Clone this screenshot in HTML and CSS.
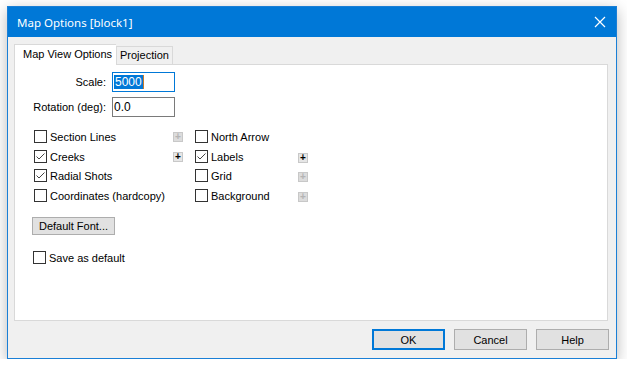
FILE: index.html
```html
<!DOCTYPE html>
<html lang="en">
<head>
    <meta charset="UTF-8">
    <title>Map Options [block1]</title>
    <link rel="stylesheet" href="styles.css">
</head>
<body>
    <div class="window">
        <div class="titlebar">
            <span class="title">Map Options [block1]</span>
            <svg class="close" width="12" height="12" viewBox="0 0 12 12">
                <path d="M1 1 L11 11 M11 1 L1 11" stroke="#fff" stroke-width="1.2" fill="none"/>
            </svg>
        </div>

        <div class="client">
            <div class="tabs">
                <div class="tab active">Map View Options</div>
                <div class="tab">Projection</div>
            </div>

            <div class="panel">
                <div class="fields">
                    <label class="field-label">Scale:</label>
                    <div class="textbox focused"><span class="selected">5000</span><span class="caret"></span></div>
                    <label class="field-label">Rotation (deg):</label>
                    <div class="textbox">0.0</div>
                </div>

                <div class="options">
                    <div class="check"><span class="box"></span>Section Lines</div>
                    <div class="plus disabled">+</div>
                    <div class="check"><span class="box"></span>North Arrow</div>
                    <div></div>

                    <div class="check"><span class="box checked"><svg width="11" height="11" viewBox="0 0 11 11"><path d="M1.5 5.5 L4 8 L9.5 2.5" stroke="#444" stroke-width="1" fill="none"/></svg></span>Creeks</div>
                    <div class="plus">+</div>
                    <div class="check"><span class="box checked"><svg width="11" height="11" viewBox="0 0 11 11"><path d="M1.5 5.5 L4 8 L9.5 2.5" stroke="#444" stroke-width="1" fill="none"/></svg></span>Labels</div>
                    <div class="plus low">+</div>

                    <div class="check"><span class="box checked"><svg width="11" height="11" viewBox="0 0 11 11"><path d="M1.5 5.5 L4 8 L9.5 2.5" stroke="#444" stroke-width="1" fill="none"/></svg></span>Radial Shots</div>
                    <div></div>
                    <div class="check"><span class="box"></span>Grid</div>
                    <div class="plus disabled low">+</div>

                    <div class="check"><span class="box"></span>Coordinates (hardcopy)</div>
                    <div></div>
                    <div class="check"><span class="box"></span>Background</div>
                    <div class="plus disabled low">+</div>
                </div>

                <button class="btn font-btn">Default Font...</button>

                <div class="check save"><span class="box"></span>Save as default</div>
            </div>

            <div class="footer">
                <button class="btn dlg default">OK</button>
                <button class="btn dlg">Cancel</button>
                <button class="btn dlg">Help</button>
            </div>
        </div>
    </div>
</body>
</html>
```

FILE: styles.css
```css
* {
    box-sizing: border-box;
    margin: 0;
    padding: 0;
}

body {
    background: #ffffff;
    font-family: 'Liberation Sans', Arial, sans-serif;
    font-size: 11px;
    color: #000;
}

.window {
    margin: 6px 0 0 7px;
    width: 610px;
    height: 353px;
    border: 1px solid #1a7fd6;
    background: #f0f0f0;
    box-shadow: 0 4px 14px rgba(0, 0, 0, 0.28);
    display: flex;
    flex-direction: column;
}

.titlebar {
    height: 30px;
    background: #0078d7;
    color: #fff;
    display: flex;
    align-items: center;
    justify-content: space-between;
    padding: 0 10px 0 9px;
}

.title {
    font-family: 'Noto Sans', sans-serif;
    font-size: 11.5px;
}

.client {
    flex: 1;
    padding: 7px 7px 0 6px;
}

/* tab strip */
.tabs {
    display: flex;
    align-items: flex-end;
    height: 20px;
}

.tab {
    height: 18px;
    padding: 0 3px;
    border: 1px solid #d9d9d9;
    border-bottom: none;
    background: #f0f0f0;
    line-height: 17px;
    white-space: nowrap;
}

.tab.active {
    height: 21px;
    width: 102px;
    padding-left: 8px;
    background: #fff;
    line-height: 19px;
    position: relative;
    top: 1px;
    border-right: none;
}

.panel {
    width: 594px;
    height: 257px;
    border: 1px solid #d9d9d9;
    background: #fff;
    padding: 7px 0 0 18px;
}

/* scale / rotation */
.fields {
    display: grid;
    grid-template-columns: 73px 63px;
    grid-auto-rows: 20px;
    column-gap: 6px;
    row-gap: 5px;
}

.field-label {
    text-align: right;
    align-self: center;
}

.textbox {
    border: 1px solid #7a7a7a;
    padding: 2px 1px;
    font-size: 12px;
    line-height: 14px;
    display: flex;
    align-items: center;
}

.textbox.focused {
    border-color: #0078d7;
}

.selected {
    background: #0078d7;
    color: #fff;
    padding: 0 1px;
}

.caret {
    width: 1px;
    height: 14px;
    background: #c87a2a;
}

/* checkbox grid */
.options {
    display: grid;
    grid-template-columns: 139px 22px 103px 10px;
    grid-template-rows: 20px 19px 20px 20px;
    margin-top: 13px;
    margin-left: 1px;
}

.check {
    display: flex;
    align-items: center;
    height: 13px;
}

.box {
    width: 13px;
    height: 13px;
    border: 1px solid #333;
    background: #fff;
    margin-right: 3px;
    display: flex;
    align-items: center;
    justify-content: center;
}

.plus {
    width: 10px;
    height: 10px;
    margin-top: 2px;
    background: #e6e6e6;
    border: 1px solid #c8c8c8;
    font-size: 10px;
    font-weight: bold;
    line-height: 8px;
    text-align: center;
    color: #000;
}

.plus.disabled {
    color: #b4b4b4;
    background: #dcdcdc;
}

.plus.low {
    margin-top: 3px;
}

.btn {
    font-family: 'Liberation Sans', Arial, sans-serif;
    font-size: 11px;
    color: #000;
    background: #e1e1e1;
    border: 1px solid #adadad;
}

.font-btn {
    display: block;
    width: 83px;
    height: 18px;
    margin-top: 8px;
    margin-left: -1px;
}

.save {
    margin-top: 16px;
}

/* dialog buttons */
.footer {
    display: flex;
    justify-content: flex-end;
    gap: 9px;
    padding: 8px 0 0 0;
}

.dlg {
    width: 73px;
    height: 21px;
}

.dlg.default {
    border: 2px solid #0078d7;
}
```
